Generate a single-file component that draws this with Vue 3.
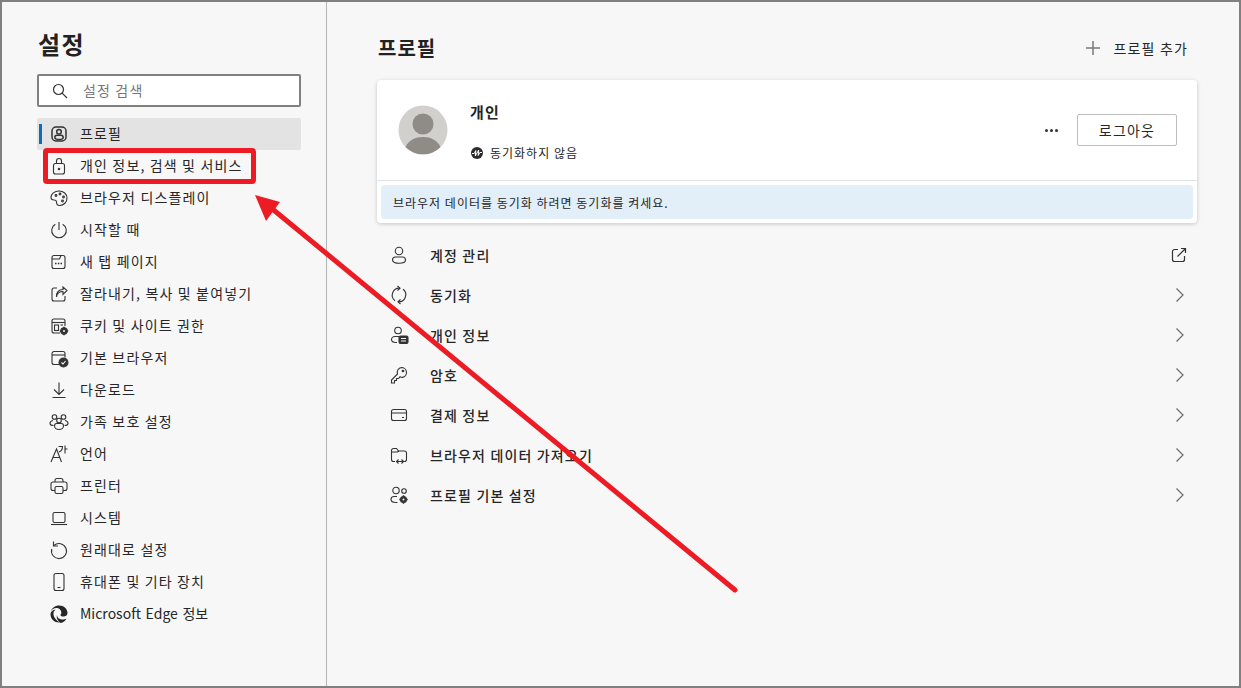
<template>
  <div class="window">
    <aside class="sidebar">
      <h1 class="title">설정</h1>
      <div class="search">
        <svg class="search-icon" width="16" height="16" viewBox="0 0 16 16">
          <circle cx="6.5" cy="6.5" r="5" />
          <path d="M10.2 10.2 15 15" />
        </svg>
        <span>설정 검색</span>
      </div>
      <nav class="nav">
        <div v-for="item in navItems" :key="item.label" class="nav-item" :class="{ active: item.active, latin: item.latin }">
          <svg class="icon" :class="{ thick: item.active }" width="20" height="20" viewBox="0 0 20 20" v-html="item.icon"></svg>
          <span class="nav-label">{{ item.label }}</span>
        </div>
      </nav>
    </aside>

    <main class="main">
      <div class="main-head">
        <h2>프로필</h2>
        <div class="add">
          <svg width="16" height="16" viewBox="0 0 16 16"><path d="M8 1v14M1 8h14" /></svg>
          <span>프로필 추가</span>
        </div>
      </div>

      <section class="card">
        <div class="card-top">
          <svg class="avatar" width="50" height="50" viewBox="0 0 50 50">
            <circle cx="25" cy="25" r="24.5" fill="#d2d0cd" />
            <circle cx="25" cy="19" r="10.5" fill="#8f8b87" />
            <path d="M7.5 42C11 35 17 32 25 32s14 3 17.5 10A24.5 24.5 0 0 1 7.5 42Z" fill="#8f8b87" />
          </svg>
          <div class="who">
            <div class="name">개인</div>
            <div class="sync">
              <svg width="12" height="12" viewBox="0 0 12 12">
                <circle cx="6" cy="6" r="6" fill="#2b2b2b" />
                <path d="M1 6.500h2.200L4.800 3.500 4.300 9 7.700 3 7.200 8.500 8.800 5.500H11" fill="none" stroke="#fff" stroke-width="1" />
              </svg>
              <span>동기화하지 않음</span>
            </div>
          </div>
          <div class="more"><i></i><i></i><i></i></div>
          <button class="logout">로그아웃</button>
        </div>
        <div class="card-note">
          <div class="note">브라우저 데이터를 동기화 하려면 동기화를 켜세요.</div>
        </div>
      </section>

      <div class="rows">
        <div v-for="row in rows" :key="row.label" class="row">
          <svg class="icon" width="20" height="20" viewBox="0 0 20 20" v-html="row.icon"></svg>
          <span class="row-label">{{ row.label }}</span>
          <svg v-if="row.external" class="ext" width="16" height="16" viewBox="0 0 16 16">
            <path d="M7 2.500H3.500a2 2 0 0 0-2 2v8a2 2 0 0 0 2 2h8a2 2 0 0 0 2-2V9M6.500 9.500 14.500 1.500M10 1.500h4.500V6" />
          </svg>
          <svg v-else class="chev" width="10" height="16" viewBox="0 0 10 16">
            <path d="M1.500 1.500 8 8l-6.500 6.500" />
          </svg>
        </div>
      </div>
    </main>

    <!-- annotation drawn over the page -->
    <svg class="marks" width="1241" height="688" viewBox="0 0 1241 688">
      <rect x="45.500" y="150.500" width="208" height="31" rx="1.500" fill="none" stroke="#ed1c24" stroke-width="5" />
      <path d="M735 590 270 207" stroke="#ed1c24" stroke-width="5" stroke-linecap="round" fill="none" />
      <path d="M255 195 280 202 266 221Z" fill="#ed1c24" />
    </svg>
  </div>
</template>

<script setup>
const navItems = [
  { label: '프로필', active: true, icon: '<rect x="3" y="3" width="14" height="14" rx="4"/><circle cx="10" cy="7.800" r="2.300"/><path d="M5.800 13.500c0-1.500 1-2.300 2.200-2.300h4c1.200 0 2.200.8 2.200 2.300s-2 2-4.200 2-4.200-.5-4.200-2Z"/>' },
  { label: '개인 정보, 검색 및 서비스', icon: '<rect x="4.500" y="7.500" width="11" height="10.500" rx="2"/><path d="M7.500 7.500V5a2.500 2.500 0 0 1 5 0v2.500"/><circle cx="10" cy="13" r=".7" fill="#333"/>' },
  { label: '브라우저 디스플레이', icon: '<path d="M10 3C5.500 3 2 6 2 9.500c0 2 1.500 2.500 3 2.500s2.500.5 2.500 2 .5 3.500 3 3.500C15 17.500 18 14 18 10s-3.500-7-8-7Z"/><circle cx="7" cy="7.500" r=".9"/><circle cx="11" cy="6" r=".9"/><circle cx="14.500" cy="9" r=".9"/><circle cx="13.500" cy="13" r=".9"/>' },
  { label: '시작할 때', icon: '<path d="M10 2v8"/><path d="M6.300 4.200a7.300 7.300 0 1 0 7.400 0"/>' },
  { label: '새 탭 페이지', icon: '<rect x="3" y="3.500" width="13" height="13" rx="2"/><path d="M3 7h7.500l1.500-3.500"/><path d="M6 11.500h1.500M8.800 11.500h1.500M11.500 11.500h1.500" stroke-width="1.600"/>' },
  { label: '잘라내기, 복사 및 붙여넣기', icon: '<path d="M8 4H5a2 2 0 0 0-2 2v9a2 2 0 0 0 2 2h9a2 2 0 0 0 2-2v-3"/><path d="M7.500 13c.5-3.500 3-5.500 6.500-5.500v3L18 6.500 14 3v2.500c-4.500 0-7 3-6.500 7.500Z"/>' },
  { label: '쿠키 및 사이트 권한', icon: '<path d="M11 17H5a2 2 0 0 1-2-2V5a2 2 0 0 1 2-2h9a2 2 0 0 1 2 2v5"/><path d="M3 6.500h13"/><rect x="5.500" y="9" width="4" height="5.500"/><path d="M11.500 9H14"/><circle cx="15" cy="15" r="3.200" fill="#333"/><path d="M15 10.800v1.400M15 17.800v1.400M10.800 15h1.400M17.800 15h1.400" stroke-width="1.500"/><circle cx="15" cy="15" r="1" fill="#f7f7f7" stroke="none"/>' },
  { label: '기본 브라우저', icon: '<path d="M10 16.500H5a2 2 0 0 1-2-2v-9a2 2 0 0 1 2-2h9a2 2 0 0 1 2 2v4"/><path d="M3 7h13"/><circle cx="14.500" cy="14.500" r="4.500" fill="#333"/><path d="M12.500 14.500l1.500 1.500 2.500-3" stroke="#fff"/>' },
  { label: '다운로드', icon: '<path d="M10 2.500v11.500M5 9.500l5 5 5-5M3.500 17.500h13"/>' },
  { label: '가족 보호 설정', icon: '<circle cx="5.500" cy="5" r="2.300"/><circle cx="14.500" cy="5" r="2.300"/><circle cx="10" cy="8.500" r="2.300"/><path d="M4 8.500c-2 .3-3 1.500-3 3 0 1.200 1 2 3.500 2"/><path d="M16 8.500c2 .3 3 1.500 3 3 0 1.200-1 2-3.500 2"/><path d="M5.500 14c0-1.500 1-2.500 2-2.500h5c1 0 2 1 2 2.500 0 2-2 3.500-4.500 3.500S5.500 16 5.500 14Z"/>' },
  { label: '언어', icon: '<path d="M2 18 7.500 5 12.500 18M4 13.500h7"/><path d="M9.500 2.500h4c0 2.500-1 4.500-3.500 5.500M16 1.500v8M16 5h2.500"/>' },
  { label: '프린터', icon: '<path d="M6 6V4.500a2 2 0 0 1 2-2h4a2 2 0 0 1 2 2V6"/><path d="M6 14.500H4a2 2 0 0 1-2-2V8a2 2 0 0 1 2-2h12a2 2 0 0 1 2 2v4.500a2 2 0 0 1-2 2h-2"/><rect x="6" y="10.500" width="8" height="7" rx="1.500"/>' },
  { label: '시스템', icon: '<rect x="4" y="4.500" width="12" height="10" rx="1.500"/><path d="M2 16.500h16"/>' },
  { label: '원래대로 설정', icon: '<path d="M5 5.500A7.500 7.500 0 1 1 2.800 9"/><path d="M4.500 1.500V6H9"/>' },
  { label: '휴대폰 및 기타 장치', icon: '<rect x="5" y="1.500" width="10" height="17" rx="2"/><path d="M8.500 15.500h3"/>' },
  { label: 'Microsoft Edge 정보', latin: true, icon: '<path d="M10 1.500c5 0 8.500 3.500 8.500 7.500 0 2.500-2 3.500-4 3.500-1.500 0-3-.5-3-1.500 0-.5.800-1 .8-2.500 0-2.500-2.300-4.500-5-4.500-2.500 0-4.500 1.500-5.500 3C3 4 6 1.500 10 1.500Z" fill="#262626" stroke="none"/><path d="M1.500 10.500c0-3 2.500-4.800 5-4.800-1.500 1-2.300 2.800-2 5 .4 3 3 6 6.500 7.800-5.500.5-9.500-3.500-9.500-8Z" fill="#262626" stroke="none"/><path d="M8 11c0 3 3 4.500 5.500 4.500 1.500 0 3-.3 4-1-1 2.500-3.500 4.300-5.800 4.500C9 17.500 7 14 8 11Z" fill="#262626" stroke="none"/>' },
]

const rows = [
  { label: '계정 관리', external: true, icon: '<circle cx="10" cy="6" r="3.700"/><path d="M3.500 15c0-2 1.500-3 3-3h7c1.500 0 3 1 3 3 0 2.200-3 3.300-6.500 3.300S3.500 17.200 3.500 15Z"/>' },
  { label: '동기화', icon: '<path d="M11 3.200A7 7 0 0 0 6 15.700M9 16.800A7 7 0 0 0 14 4.300"/><path d="M8.500 1 11 3.200 8.500 5.500M11.500 19 9 16.800 11.500 14.500"/>' },
  { label: '개인 정보', icon: '<circle cx="9" cy="5.500" r="3.300"/><path d="M10 11.500H6c-2 0-3.500 1.300-3.500 3S4 17.500 7 17.500h1"/><rect x="10" y="11" width="9" height="7.500" rx="1.500" fill="#333"/><path d="M12 13.500h5M12 16h5" stroke="#f7f7f7"/>' },
  { label: '암호', icon: '<path d="M12.500 2.500a5 5 0 0 1 1 9.900c-1 0-1.800-.2-2.500-.6L9.500 13.500h-2v2h-2V18h-3v-3l6-6a5 5 0 0 1 4-6.500Z"/><circle cx="14" cy="6" r=".8" fill="#333"/>' },
  { label: '결제 정보', icon: '<rect x="2.500" y="4.500" width="15" height="11" rx="2"/><path d="M2.500 8h15M13 12.500h2"/>' },
  { label: '브라우저 데이터 가져오기', icon: '<path d="M6 16.500H4.500a2 2 0 0 1-2-2v-9a2 2 0 0 1 2-2h3L9.500 6h6a2 2 0 0 1 2 2v6.500a2 2 0 0 1-2 2H15"/><path d="M2.500 7h6L10 6"/><path d="M8 16.500h6M9.500 14.500l-2 2 2 2M12.500 14.500l2 2-2 2"/>' },
  { label: '프로필 기본 설정', icon: '<circle cx="7" cy="5.500" r="3.200"/><circle cx="15" cy="6" r="2.300"/><path d="M8 11.500H5c-2 0-3 1.300-3 3S4 17.500 7 17.500h1.500"/><circle cx="14.500" cy="14.500" r="3" fill="#333"/><path d="M14.500 10.300v1.400M14.500 17.300v1.400M10.300 14.500h1.400M17.300 14.500h1.400" stroke-width="1.500"/><circle cx="14.500" cy="14.500" r="1" fill="#f7f7f7" stroke="none"/>' },
]
</script>

<style>
html, body {
  margin: 0;
  background: #f7f7f7;
}
</style>

<style scoped>
.window {
  position: relative;
  display: flex;
  width: 1241px;
  height: 688px;
  box-sizing: border-box;
  border: 2px solid #808080;
  background: #f7f7f7;
  color: #262626;
  font-family: "Noto Sans CJK KR", "Noto Sans", sans-serif;
  font-size: 14px;
  letter-spacing: 1.15px;
  overflow: hidden;
}

.sidebar {
  width: 325px;
  flex: none;
  box-sizing: border-box;
  padding: 0 25px 0 35px;
  border-right: 1px solid #b4b4b4;
}

.title {
  margin: 24px 0 0 1px;
  font-size: 24px;
  line-height: 36px;
  font-weight: 700;
  letter-spacing: 1.5px;
  color: #222;
}

.search {
  display: flex;
  align-items: center;
  height: 33px;
  margin-top: 12px;
  box-sizing: border-box;
  border: 2px solid #808080;
  border-radius: 2px;
  background: #fff;
  padding-left: 13px;
  color: #767676;
}

.search span {
  padding-bottom: 2px;
}

.search-icon {
  margin-right: 15px;
  fill: none;
  stroke: #333;
  stroke-width: 1.2;
}

.nav {
  margin-top: 11px;
}

.nav-item {
  position: relative;
  display: flex;
  align-items: center;
  height: 32px;
  padding-left: 12px;
  border-radius: 2px;
}

.nav-item .icon {
  margin-right: 11px;
}

.nav-label {
  padding-bottom: 2px;
}

.nav-item.latin {
  letter-spacing: 0;
  word-spacing: 1.5px;
}

.nav-item.active {
  background: #e3e3e3;
}

.nav-item.active::before {
  content: "";
  position: absolute;
  left: 2px;
  top: 6px;
  width: 3px;
  height: 20px;
  background: #0f6cbd;
}

.icon {
  flex: none;
  fill: none;
  stroke: #333;
  stroke-width: 1.1;
}

.icon.thick {
  stroke-width: 1.5;
}

.main {
  flex: 1;
  min-width: 0;
  padding: 0 42px 0 50px;
}

.main-head {
  display: flex;
  align-items: center;
  justify-content: space-between;
  height: 78px;
  box-sizing: border-box;
  padding-top: 14px;
}

.main-head h2 {
  margin: 0 0 2px 1px;
  font-size: 20px;
  font-weight: 700;
  letter-spacing: 1px;
  color: #222;
}

.add {
  display: flex;
  align-items: center;
  gap: 13px;
  margin-right: 9px;
}

.add svg {
  fill: none;
  stroke: #7a7a7a;
  stroke-width: 1.5;
}

.card {
  border-radius: 4px;
  background: #fff;
  box-shadow: 0 1px 4px rgba(0, 0, 0, 0.2);
}

.card-top {
  display: flex;
  align-items: center;
  height: 100px;
  padding: 0 20px 0 21px;
  border-bottom: 1px solid #e3e3e3;
}

.avatar {
  flex: none;
}

.who {
  flex: 1;
  margin-left: 22px;
}

.name {
  font-size: 15px;
  font-weight: 600;
  line-height: 22px;
  margin-top: 3px;
}

.sync {
  display: flex;
  align-items: center;
  gap: 7px;
  margin: 21px 0 0 1px;
  font-size: 12px;
  line-height: 18px;
  letter-spacing: 1px;
}

.more {
  display: flex;
  gap: 2px;
  margin-right: 19px;
}

.more i {
  width: 3px;
  height: 3px;
  border-radius: 50%;
  background: #333;
}

.logout {
  width: 100px;
  height: 32px;
  border: 1px solid #bdbdbd;
  border-radius: 2px;
  background: #fff;
  color: #262626;
  font: inherit;
  letter-spacing: 1.2px;
}

.card-note {
  padding: 4px;
}

.note {
  height: 34px;
  display: flex;
  align-items: center;
  padding-left: 12px;
  border-radius: 4px;
  background: #e2eef8;
  font-size: 12px;
  letter-spacing: 1px;
}

.rows {
  margin-top: 12px;
}

.row {
  display: flex;
  align-items: center;
  height: 40px;
  padding: 0 10px 0 12px;
}

.row .icon {
  margin-right: 21px;
}

.row-label {
  flex: 1;
  font-weight: 500;
}

.ext {
  fill: none;
  stroke: #333;
  stroke-width: 1.2;
}

.chev {
  fill: none;
  stroke: #6a6a6a;
  stroke-width: 1.2;
  margin-right: 2px;
}

.marks {
  position: absolute;
  left: -2px;
  top: -2px;
  pointer-events: none;
}
</style>
